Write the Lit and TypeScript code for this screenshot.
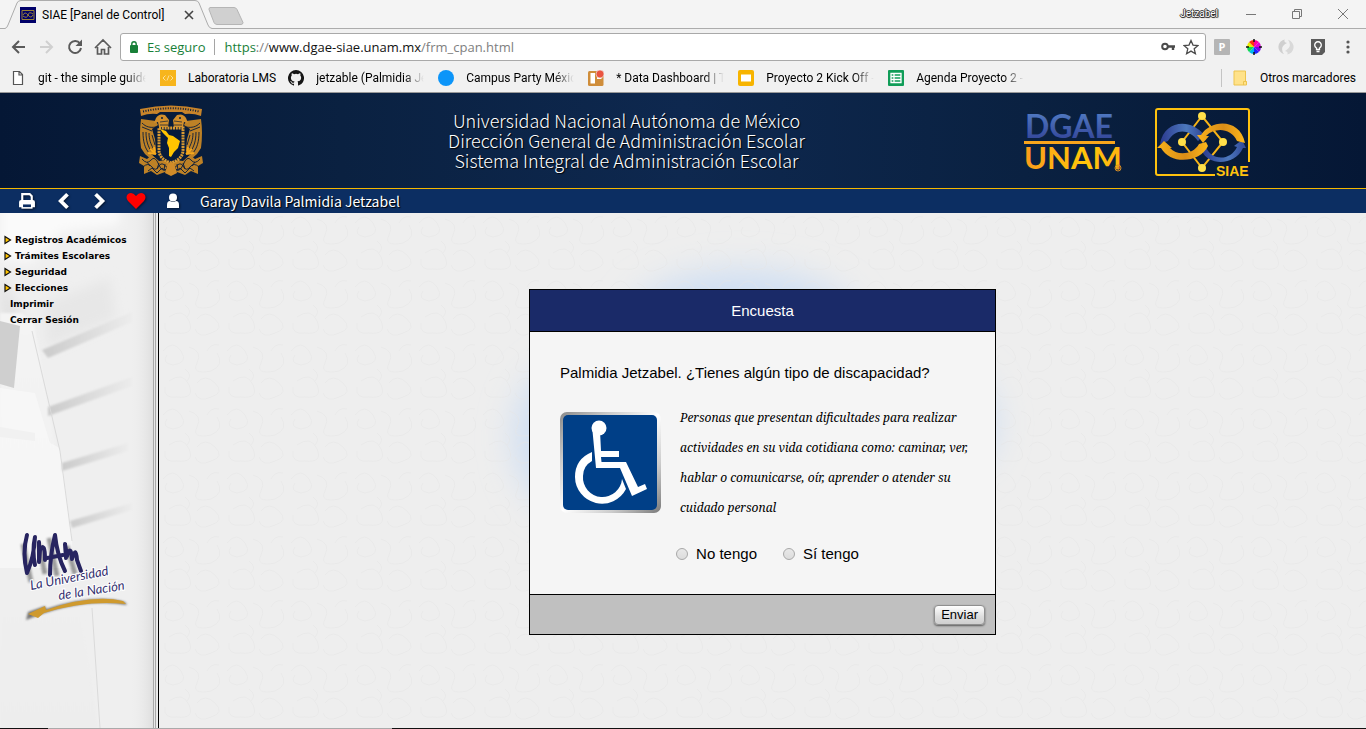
import { LitElement, html, css, svg } from "lit";
import { customElement, state } from "lit/decorators.js";

type Bookmark = { label: string; icon: unknown; fixed?: boolean };

const icon16 = (body: unknown) => html`<svg class="i16" viewBox="0 0 16 16" aria-hidden="true">${body}</svg>`;

const folder = svg`<path d="M2 1h11.500v10.500h1v3.500h-12.500z" fill="#ffe28a" stroke="#edc44f"/><path d="M11.500 15v-3.500h3" fill="none" stroke="#edc44f"/>`;

const bookmarks: Bookmark[] = [
  { label: "git - the simple guide", icon: svg`<path d="M3.500 1.500h6l3 3v10h-9zM9 1.500v3.500h3.500" fill="#fff" stroke="#555" stroke-width="1.200"/>` },
  { label: "Laboratoria LMS", fixed: true, icon: svg`<rect width="16" height="16" fill="#f7b51c"/><path d="M5.500 5.500L3 8l2.500 2.500M10.500 5.500L13 8l-2.500 2.500M9 5.500l-2 5" fill="none" stroke="#fde09a"/>` },
  { label: "jetzable (Palmidia Jet", icon: svg`<path fill="#161616" d="M8 0a8 8 0 0 0-2.530 15.590c.4.070.55-.17.55-.38v-1.490c-2.230.48-2.700-.95-2.700-.95-.36-.92-.89-1.170-.89-1.170-.73-.5.060-.49.060-.49.8.060 1.230.83 1.230.83.72 1.220 1.870.87 2.330.67.070-.52.280-.87.510-1.070-1.780-.2-3.640-.89-3.640-3.950 0-.87.310-1.590.82-2.150-.08-.2-.36-1.020.08-2.120 0 0 .67-.21 2.200.82a7.600 7.600 0 0 1 4 0c1.530-1.040 2.200-.82 2.200-.82.440 1.100.160 1.920.080 2.120.51.560.820 1.270.820 2.150 0 3.070-1.870 3.750-3.650 3.950.29.250.54.730.54 1.480v2.190c0 .21.150.46.550.38A8 8 0 0 0 8 0z"/>` },
  { label: "Campus Party Méxic", icon: svg`<circle cx="8" cy="8" r="8" fill="#0c95f9"/>` },
  { label: "* Data Dashboard | T", icon: svg`<rect y="1" width="15.500" height="15" rx="1.500" fill="#cf8d3a"/><rect x="2.500" y="3" width="4.500" height="10.500" fill="#fff"/><rect x="9" y="3" width="4.500" height="6" fill="#fff"/><circle cx="12" cy="4" r="4" fill="#ea5440" stroke="#f1f1f1" stroke-width=".6"/>` },
  { label: "Proyecto 2 Kick Off -", icon: svg`<rect width="16" height="16" rx="2" fill="#f7b400"/><rect x="3" y="4.500" width="10" height="7" fill="#fff"/>` },
  { label: "Agenda Proyecto 2 -", icon: svg`<rect width="16" height="16" rx="1" fill="#109d58"/><path d="M3 3.500h10v9H3zM3 6.500h10M3 9.500h10M6 3.500v9" fill="none" stroke="#fff" stroke-width="1.300"/>` },
];

const siaeMark = svg`
  <defs>
    <linearGradient id="blue"><stop offset="0" stop-color="#2b3a8f"/><stop offset=".6" stop-color="#4c78bd"/><stop offset="1" stop-color="#2f4596"/></linearGradient>
    <linearGradient id="gold"><stop offset="0" stop-color="#fbb21a"/><stop offset=".55" stop-color="#d98d18"/><stop offset="1" stop-color="#fdb81a"/></linearGradient>
  </defs>
  <path d="M94 54V3q0-2-2-2H3Q1 1 1 3v62q0 2 2 2h57" fill="none" stroke="#ffc20e" stroke-width="2"/>
  <path d="M47 8L27 34l20 26 21-26z" fill="none" stroke="#f7b416" stroke-width="2"/>
  <path d="M5 36C9 12 36 10 49 27l-6 6C34 21 21 20 13 33z" fill="url(#blue)"/>
  <path d="M50 36c4 17 25 18 32 3l-3-1 8-6 4 8-3 0C80 58 53 58 47 43z" fill="url(#blue)"/>
  <path d="M90 35C85 10 56 11 46 27l-4 0 6 8 6-7-3 0C60 19 76 20 82 33z" fill="url(#gold)"/>
  <path d="M6 40C16 58 46 54 53 38l-2-4-7 2C38 47 22 48 15 40l2 0-8-7-7 7z" fill="url(#gold)"/>
  <g fill="#ffe04a"><circle cx="47" cy="8" r="4"/><circle cx="27" cy="34" r="4"/><circle cx="68" cy="34" r="4"/><circle cx="47" cy="60" r="4"/></g>`;

const nav = {
  print: svg`<path d="M4 8V1.500h7l2 2V8" fill="none" stroke="#fff" stroke-width="2"/><path d="M1 14V9q0-2 2-2h11q2 0 2 2v5h-3v-3H4v3z" fill="#fff"/><rect x="4" y="10.500" width="9" height="4" fill="#0c2e62" stroke="#fff" stroke-width="1.500"/>`,
  back: svg`<path d="M12 2L6 8l6 6" fill="none" stroke="#fff" stroke-width="3.400"/>`,
  next: svg`<path d="M5 2l6 6-6 6" fill="none" stroke="#fff" stroke-width="3.400"/>`,
};

@customElement("app-root")
export class AppRoot extends LitElement {
  @state() private answer = "";

  static styles = css`
    :host { display: flex; flex-direction: column; min-height: 100vh; background: #eee; color: #000; --ui: Roboto, "Noto Sans", sans-serif; --url: "Open Sans", "Noto Sans", sans-serif; --head: "Noto Sans CJK SC", "Noto Sans", sans-serif; --form: "Liberation Sans", sans-serif; }
    * { box-sizing: border-box; }
    svg { display: block; flex: none; }
    button { border: 0; padding: 0; background: none; font: inherit; color: inherit; display: grid; place-items: center; flex: none; }
    a { color: inherit; text-decoration: none; }
    .i16 { width: 16px; height: 16px; }
    .i18 { width: 18px; height: 18px; }

    .tabs { display: flex; height: 29px; background: #f4f4f4; border-bottom: 1px solid #acacac; font: 12px/16px var(--ui); }
    .tab { position: relative; display: flex; align-items: center; gap: 6px; width: 212px; height: 29px; padding-left: 20px; }
    .tabshape { position: absolute; inset: 0; width: 212px; height: 29px; }
    .tab span, .tab button, .tab .i16 { position: relative; }
    .tab span { width: 136px; white-space: nowrap; }
    .newtab { margin: 7px 0 0 -4px; align-self: flex-start; }
    .win { margin-left: auto; display: flex; align-items: center; padding-right: 16px; }
    .who { font-size: 10px; color: #fff; margin-right: 26px; text-shadow: 1px 0 #333, -1px 0 #333, 0 1px #333, 0 -1px #333, 1px 1px 1px #555; }
    .win button { width: 14px; margin-left: 32px; }
    .win button:first-of-type { margin-left: 0; }

    .bar { display: flex; align-items: center; gap: 12px; height: 36px; padding: 0 12px 0 10px; background: #f1f1f1; }
    .bar .i16, .bar .i18 { flex: none; }
    .bar > .arrows { display: flex; gap: 10px; }
    .url { flex: 1; display: flex; align-items: center; height: 28px; margin-left: -4px; margin-right: -4px; padding: 0 6px; gap: 6px; background: #fff; border: 1px solid #a9a9a9; border-radius: 3px; font: 13px/20px var(--url); white-space: nowrap; }
    .safe { color: #188038; padding-right: 9px; border-right: 1px solid #a5a5a5; line-height: 16px; }
    .addr { flex: 1; min-width: 0; margin-left: 3px; color: #808080; }
    .addr b { font-weight: 400; color: #111; }
    .addr i { font-style: normal; color: #188038; }
    .ext { display: flex; gap: 16px; }

    .marks { display: flex; align-items: center; gap: 12px; height: 28px; padding: 0 10px 1px; background: #f1f1f1; border-bottom: 1px solid #999; font: 12px/18px var(--ui); white-space: nowrap; }
    .mark { display: flex; align-items: center; gap: 12px; }
    .mark span { width: 110px; overflow: hidden; mask-image: linear-gradient(90deg, #000 80%, transparent 98%); }
    .mark.fixed span { width: auto; mask-image: none; }
    .other { margin-left: auto; padding-left: 10px; border-left: 1px solid #c4c4c4; }

    header { display: flex; align-items: center; height: 96px; padding: 0 115px 0 139px; background: linear-gradient(90deg, #051735, #0a2141 25%, #0e284f 50%, #0a2141 75%, #051735); border-bottom: 1px solid #f4b700; }
    h1 { flex: 1; margin: 0; padding: 0 0 2px 26px; text-align: center; font: 300 18px/20px var(--head); color: #fff; text-shadow: 1px 1px 1px #000; }
    .logos { display: flex; gap: 33px; padding-top: 4px; }

    nav { display: flex; align-items: center; height: 24px; padding: 0 18px; gap: 18px; background: #0c2e62; color: #fff; font: 400 14px/20px var(--head); text-shadow: 1px 1px 1px #000; }
    nav svg { filter: drop-shadow(1px 1px 1px #0008); }

    .page { flex: 1; display: flex; }
    aside { display: grid; width: 159px; border-right: 1px solid #000; overflow: hidden; contain: size; background: #efefef; }
    aside > * { grid-area: 1 / 1; }
    .photo { width: 158px; height: 515px; }
    ul { z-index: 1; list-style: none; margin: 0; padding: 19px 0 0 4px; font: bold 9px/16px "DejaVu Sans", sans-serif; align-self: start; }
    li a { display: flex; align-items: center; gap: 3px; }
    .leaf { padding-left: 6px; }

    main { flex: 1; display: grid; overflow: hidden; }
    main > * { grid-area: 1 / 1; }
    .paper { width: 100%; height: 100%; contain: size; }
    form { z-index: 1; justify-self: center; align-self: start; width: 467px; margin: 76px 0; border: 1px solid #000; background: #f5f5f5; font: 15px/24px var(--form); }
    h2 { margin: 0; padding: 9px; border-bottom: 1px solid #000; background: #1a2a68; color: #fff; font: inherit; line-height: 23px; text-align: center; }
    .body { padding: 29px 20px 28px 30px; }
    .body p { margin: 0; }
    .info { display: flex; gap: 19px; margin-top: 18px; }
    .info svg { margin-top: 9px; }
    .info p { font: italic 12px/30px "Noto Serif", "Droid Serif", "DejaVu Serif Condensed", serif; }
    fieldset { display: flex; justify-content: center; gap: 26px; margin: 19px 0 0; padding: 0; border: 0; }
    label { display: flex; align-items: center; gap: 8px; }
    input { appearance: none; width: 12px; height: 12px; margin: 0; border: 1px solid #a8a8a8; border-radius: 50%; background: linear-gradient(#e8e8e8, #dcdcdc); }
    input:checked { background: radial-gradient(#444 35%, #e4e4e4 40%); }
    footer { display: flex; justify-content: flex-end; padding: 10px 10px 9px; border-top: 1px solid #000; background: #c0c0c0; }
    .send { height: 20px; padding: 0 6px; border: 1px solid #8f8f8f; border-radius: 4px; background: linear-gradient(#fff, #ddd 60%, #cfcfcf); font: 13px/18px var(--form); box-shadow: 0 1px 2px #0008; }
    .edge { height: 1px; background: linear-gradient(90deg, #111 48px, #aaa 48px 392px, #111 392px); }
  `;

  private crest() {
    const side = svg`
      <path d="M2 14l15 2 2 4-6 4 3 10 1 12-5 3 5 5-3 2-8-7-4-6Q0 28 2 14z" fill="#bd8126"/>
      <path d="M3 18c4 4 8 5 14 4M3 22l10 4M4 27c0 10 2 16 6 21M7 27c0 9 2 14 5 19M10 28c0 7 2 11 4 15M13 30l3 10" stroke="#071b3b" stroke-width=".9" fill="none"/>
      <path d="M17 13q3-5 9-3l4 5-1 7h-9l-1-5-4 1z" fill="#d28f2b"/><circle cx="23" cy="13" r="1" fill="#071b3b"/>
      <path d="M21 17l8-1M21 20h8" stroke="#071b3b" stroke-width=".7"/>
      <path d="M11 44l6 5M9 48l8 1M15 42l1 7" stroke="#f5a81c" stroke-width="2"/>
      <path d="M1 51l7 3 5-4 7 6 8-1 4 7v8l-6-3-8 3-6-4-7 3 0-8-5-3z" fill="#bd8126"/>
      <path d="M3 54q5 6 9 1t8 5 10 1M4 62q5-5 9 0t7-1 10 4M9 66l4-3 5 5 5-5 6 5M8 57l3 4M20 58l-2 6M26 59l-1 6" fill="none" stroke="#071b3b" stroke-width=".9"/>`;
    return html`<svg width="64" height="72" viewBox="0 0 64 72" role="img" aria-label="Escudo UNAM">
      <path d="M1 4Q32-3 63 4l-1 7q-8-3-16-2l-3-2H21l-3 2q-8-1-16 2z" fill="#c8842a"/>
      <path d="M4 6.500Q32 0 60 6.500" fill="none" stroke="#071b3b" stroke-width="2" stroke-dasharray="1 1.500"/>
      ${side}<g transform="matrix(-1 0 0 1 64 0)">${side}</g>
      <path d="M20 23h24v22q0 9-12 13-12-4-12-13z" fill="#071b3b" stroke="#d99a32" stroke-width="3" stroke-dasharray="2 .8"/>
      <path d="M21 24l6 2 3 4 4 1 7 5-2 7-4 4-3 5-2-1v-8l-2-5 1-5-5-5z" fill="#ffc400"/>
      <path d="M29 59l3-3 3 3 3 9-6 3-6-3z" fill="#d08b28"/>
    </svg>`;
  }

  private photo() {
    return html`<svg class="photo" viewBox="0 0 158 515" preserveAspectRatio="none" aria-hidden="true">
      <defs>
        <filter id="soft"><feGaussianBlur stdDeviation="6"/></filter>
        <filter id="soft1"><feGaussianBlur stdDeviation="1"/></filter>
        <linearGradient id="fade"><stop offset="0" stop-color="#cbcbcb"/><stop offset="1" stop-color="#ececec"/></linearGradient>
        <linearGradient id="down" x2="0" y2="1"><stop offset="0" stop-color="#f4f4f4"/><stop offset="1" stop-color="#ededed"/></linearGradient>
        <linearGradient id="spine"><stop offset="0" stop-color="#eee" stop-opacity="0"/><stop offset="1" stop-color="#ddd"/></linearGradient>
      </defs>
      <rect width="158" height="515" fill="#efefef"/>
      <g filter="url(#soft)">
        <path d="M0-10h120v22L60 20 30 50 0 45z" fill="#fafafa"/>
        <path d="M45 90l65-25 6 40-70 30z" fill="#e7e7e7"/><path d="M0 60l30 60-6 60H0z" fill="#e2e2e2"/>
      </g>
      <path d="M22 100l12 10 38 220 26 185H0V100z" fill="url(#down)" filter="url(#soft1)"/>
      <path d="M0 108l20 5-6 62-14-4z" fill="#cfcfcf"/><path d="M0 214l35 6v8L0 224z" fill="#d5d5d5"/>
      <path d="M0 175l35 5 15 50 10 5 12 90v30H0z" fill="#f8f8f8" opacity=".8"/>
      <g fill="url(#fade)" filter="url(#soft1)">
        <path d="M42 137l90-38v10L48 145z"/><path d="M48 194l84-30v9L48 203z"/><path d="M62 250l66-20v8L62 258z"/><path d="M70 308l62-18v7L72 315z"/>
      </g>
      <path d="M32 118l28 120 12 90M92 395l8 120" fill="none" stroke="#dadada"/>
      <rect x="130" width="24" height="515" fill="url(#spine)"/>
      <path d="M153.500 0v515M155.500 0v515" stroke="#a9a9a9"/><path d="M154.500 0v515M156.500 0v515" stroke="#e8e8e8"/>
      <g filter="url(#soft1)" opacity=".45" transform="translate(-3 3)"><path d="M26 328l8 38M42 328l6 30M52 322l8 38M70 330l8 28" stroke="#333" stroke-width="5"/></g>
      <g fill="none" stroke="#272460" stroke-linecap="round" stroke-linejoin="round">
        <path d="M27 322q-5 18 0 38 7-16 8-36-3 14 0 28" stroke-width="4"/>
        <path d="M39 329v20l1-12q5-9 5 10" stroke-width="4"/>
        <path d="M50 362q0-20 5-40 2 20 10 36M47 345l16-3" stroke-width="4"/>
        <path d="M66 345l-1-14 2 12q4-12 5 3 4-14 5 1l4 11" stroke-width="4"/>
      </g>
      <g fill="#35316f" stroke="#fff" stroke-width="2" paint-order="stroke" font-family="Lato, sans-serif" font-style="italic" font-size="13">
        <text transform="translate(31 377) rotate(-11)">La Universidad</text><text transform="translate(59 387) rotate(-9)">de la Nación</text>
      </g>
      <path d="M26 407q55-23 101-15l-2-3Q95 380 46 396l-1-3-17 6z" fill="#777" filter="url(#soft1)"/>
      <path d="M28 401l17-8 1 4Q92 381 123 388l3 3q-40-4-82 9l-6 5z" fill="#cf9a2e"/>
    </svg>`;
  }

  private paper() {
    return html`<svg class="paper" aria-hidden="true">
      <defs>
        <pattern id="curls" width="64" height="64" patternUnits="userSpaceOnUse">
          <g fill="none" stroke="#e5e5e5"><path d="M4 10q10-12 18 0t-8 14q-12-2-6-10M30 6q14 4 8 16t14 8q14-6 6-18M10 40q14-10 20 4t-12 12q-14 2-12-10M38 42q8-10 18 0t-4 14q-12 6-16-4M26 28q8 6 2 12M48 10q4-8 12-6"/></g>
        </pattern>
        <filter id="glow" x="-50%" y="-50%" width="200%" height="200%"><feGaussianBlur stdDeviation="17"/></filter>
      </defs>
      <rect width="100%" height="100%" fill="#eeeeee"/>
      <svg x="50%" width="1" height="1" overflow="visible"><g filter="url(#glow)" fill="#cedef3">
        <ellipse cx="-20" cy="112" rx="115" ry="54"/><ellipse cx="-188" cy="225" rx="60" ry="75"/><ellipse cx="192" cy="210" rx="40" ry="50"/>
      </g></svg>
      <rect width="100%" height="100%" fill="url(#curls)" opacity=".55"/>
    </svg>`;
  }

  render() {
    return html`
      <div class="tabs">
        <div class="tab">
          <svg class="tabshape" viewBox="0 0 212 29" aria-hidden="true"><path d="M0 28.500h5Q7 28 8 25L17 3q1-2.500 4-2.500h174q3 0 4 2.500l9 22q1 3 4 3.500v.5H0z" fill="#f1f1f1"/><path d="M0 28.500h5Q7 28 8 25L17 3q1-2.500 4-2.500h174q3 0 4 2.500l9 22q1 3 4 3.500" fill="none" stroke="#acacac"/></svg>
          <svg class="i16" viewBox="0 0 16 16" aria-hidden="true"><rect width="16" height="16" fill="#000069"/><path d="M2 3.500h12v9H2zM3 8q2-4 5 0t5 0M3 9q4 3 5-1t5-1" fill="none" stroke="#998238"/></svg>
          <span>SIAE [Panel de Control]</span>
          <button aria-label="Cerrar pestaña"><svg width="10" height="10" viewBox="0 0 10 10"><path d="M1 1l8 8M9 1L1 9" stroke="#444" stroke-width="1.600"/></svg></button>
        </div>
        <button class="newtab" aria-label="Nueva pestaña"><svg width="36" height="18" viewBox="0 0 36 18"><path d="M2 .5h24q2 0 3 2l6 13q0 2-2 2H9q-2 0-3-2L1 2.500Q1 .5 2 .5z" fill="#d0d0d0" stroke="#b5b5b5"/></svg></button>
        <div class="win">
          <span class="who">Jetzabel</span>
          <button aria-label="Minimizar"><svg width="12" height="12" viewBox="0 0 12 12"><path d="M1 6.500h10" stroke="#777"/></svg></button>
          <button aria-label="Restaurar"><svg width="12" height="12" viewBox="0 0 12 12"><path d="M1.500 3.500h7v7h-7zM3.500 3.500v-2h7v7h-2" fill="none" stroke="#777"/></svg></button>
          <button aria-label="Cerrar"><svg width="12" height="12" viewBox="0 0 12 12"><path d="M1 1l10 10M11 1L1 11" stroke="#777"/></svg></button>
        </div>
      </div>

      <div class="bar">
        <div class="arrows">
          <button aria-label="Atrás"><svg class="i18" viewBox="0 0 18 18"><path d="M15 9H3M9 3L3 9l6 6" fill="none" stroke="#5a5a5a" stroke-width="2"/></svg></button>
          <button aria-label="Adelante"><svg class="i18" viewBox="0 0 18 18"><path d="M2 9h12M8 3l6 6-6 6" fill="none" stroke="#d0d0d0" stroke-width="2"/></svg></button>
          <button aria-label="Recargar"><svg class="i18" viewBox="0 0 18 18"><path d="M14 5.500A6 6 0 1 0 15 10" fill="none" stroke="#5a5a5a" stroke-width="2"/><path d="M16 1.500V8H9.500z" fill="#5a5a5a"/></svg></button>
          <button aria-label="Inicio"><svg class="i18" viewBox="0 0 18 18"><path d="M1 10l8-8 8 8M3.500 9v7h4v-4.500h3V16h4V9" fill="none" stroke="#5a5a5a" stroke-width="1.700"/></svg></button>
        </div>
        <div class="url">
          <svg width="14" height="14" viewBox="0 0 14 14" aria-hidden="true"><rect x="3" y="5" width="8" height="8" rx="1" fill="#188038"/><path d="M4.800 6V4a2.200 2.200 0 0 1 4.400 0v2" fill="none" stroke="#188038" stroke-width="1.400"/></svg>
          <span class="safe">Es seguro</span>
          <span class="addr"><i>https</i>://<b>www.dgae-siae.unam.mx</b>/frm_cpan.html</span>
          <button aria-label="Contraseñas"><svg class="i16" viewBox="0 0 16 16"><circle cx="4" cy="7.500" r="2.800" fill="none" stroke="#4a4a4a" stroke-width="2"/><path d="M7 7.500h7M12 7.500V11" stroke="#4a4a4a" stroke-width="2.400"/></svg></button>
          <button aria-label="Añadir a marcadores"><svg class="i16" viewBox="0 0 16 16"><path d="M8 1.500l2 4.600 5 .4-3.800 3.300 1.200 4.900L8 12.100l-4.400 2.600 1.200-4.900L1 6.500l5-.4z" fill="none" stroke="#4a4a4a" stroke-width="1.300"/></svg></button>
        </div>
        <div class="ext">
          <svg class="i16" viewBox="0 0 16 16" aria-hidden="true"><rect width="16" height="16" rx="1" fill="#b5b5b5"/><text x="4.500" y="12" font-family="Open Sans" font-weight="700" font-size="11" fill="#fff">P</text></svg>
          <svg class="i16" viewBox="0 0 16 16" aria-hidden="true">${["#ff00a0", "#e000d8", "#7a00e8", "#1c20ff", "#00b8f0", "#10d850", "#e8ec00", "#ff3010"].map((c, i) => svg`<path d="M8 8L8 1A7 7 0 0 1 12.950 3.050z" fill=${c} transform=${`rotate(${i * 45} 8 8)`}/>`)}<path d="M8 0v3M8 13v3M0 8h3M13 8h3" stroke="#111" stroke-width="1.500"/></svg>
          <svg class="i16" viewBox="0 0 16 16" aria-hidden="true"><path d="M7 .5A7.500 7.500 0 0 0 6 15.200Q1 8 9 4Q5 3 7 .5z" fill="#cfcfcf"/><path d="M9 15.500A7.500 7.500 0 0 0 10 .8Q15 8 7 12q4 1 2 3.500z" fill="#d9d9d9"/></svg>
          <svg class="i16" viewBox="0 0 16 16" aria-hidden="true"><path d="M1 0h14v13l-3 3H1z" fill="#5b5b5b"/><path d="M6.500 10.500V9a3.300 3.300 0 1 1 3 0v1.500zM6.500 12.500h3" fill="none" stroke="#fff" stroke-width="1.300"/></svg>
          <button aria-label="Menú"><svg width="12" height="16" viewBox="0 0 12 16"><g fill="#555"><circle cx="6" cy="3" r="1.600"/><circle cx="6" cy="8" r="1.600"/><circle cx="6" cy="13" r="1.600"/></g></svg></button>
        </div>
      </div>

      <div class="marks">
        ${bookmarks.map((b) => html`<a class="mark ${b.fixed ? "fixed" : ""}" href="#">${icon16(b.icon)}<span>${b.label}</span></a>`)}
        <a class="mark fixed other" href="#">${icon16(folder)}<span>Otros marcadores</span></a>
      </div>

      <header>
        ${this.crest()}
        <h1>Universidad Nacional Autónoma de México<br>Dirección General de Administración Escolar<br>Sistema Integral de Administración Escolar</h1>
        <div class="logos">
          <svg width="98" height="68" viewBox="0 0 98 68" role="img" aria-label="DGAE UNAM">
            <defs>
              <linearGradient id="db" x2="0" y2="1"><stop offset="0" stop-color="#5685cb"/><stop offset="1" stop-color="#2f3d92"/></linearGradient>
              <linearGradient id="ug" x2="1" y2="0"><stop offset="0" stop-color="#fb9a1c"/><stop offset=".6" stop-color="#ffc60b"/><stop offset="1" stop-color="#ffb40f"/></linearGradient>
            </defs>
            <g font-family="Lato, sans-serif" font-weight="700"><text x="1" y="30" font-size="32" fill="url(#db)">DGAE</text><text x="0" y="61" font-size="31" fill="url(#ug)">UNAM</text></g>
            <rect y="33" width="91" height="3" fill="#f9a51c"/><circle cx="94" cy="60" r="3" fill="none" stroke="#d58c24"/><path d="M93 62v-3h2l-1 1 1 2" fill="none" stroke="#d58c24"/>
          </svg>
          <svg width="96" height="70" viewBox="0 0 96 70" role="img" aria-label="SIAE">${siaeMark}<text x="61" y="68" font-family="Liberation Sans, sans-serif" font-weight="700" font-size="14" fill="#ffc20e">SIAE</text></svg>
        </div>
      </header>

      <nav>
        <button aria-label="Imprimir"><svg class="i18" viewBox="0 0 17 16">${nav.print}</svg></button>
        <button aria-label="Anterior"><svg class="i18" viewBox="0 0 16 16">${nav.back}</svg></button>
        <button aria-label="Siguiente"><svg class="i18" viewBox="0 0 16 16">${nav.next}</svg></button>
        <button aria-label="Favoritos"><svg width="20" height="18" viewBox="0 0 20 18"><path d="M10 17L2 9Q-1 5 2 2q4-3 8 2 4-5 8-2 3 3 0 7z" fill="#f00"/></svg></button>
        <svg class="i18" viewBox="0 0 18 18" aria-hidden="true"><circle cx="9" cy="5.500" r="4" fill="#fff"/><path d="M3 16v-3q0-4 3-4 3 2 6 0 3 0 3 4v3z" fill="#fff"/></svg>
        <span>Garay Davila Palmidia Jetzabel</span>
      </nav>

      <div class="page">
        <aside>
          ${this.photo()}
          <ul>
            ${["Registros Académicos", "Trámites Escolares", "Seguridad", "Elecciones"].map((t) => html`<li><a href="#"><svg width="8" height="10" viewBox="0 0 8 10" aria-hidden="true"><path d="M1 1.500L6.500 5 1 8.500z" fill="#ffc400" stroke="#111" stroke-width="1.200"/></svg>${t}</a></li>`)}
            ${["Imprimir", "Cerrar Sesión"].map((t) => html`<li class="leaf"><a href="#">${t}</a></li>`)}
          </ul>
        </aside>
        <main>
          ${this.paper()}
          <form @submit=${(e: Event) => e.preventDefault()}>
            <h2>Encuesta</h2>
            <div class="body">
              <p>Palmidia Jetzabel. ¿Tienes algún tipo de discapacidad?</p>
              <div class="info">
                <svg width="101" height="101" viewBox="0 0 101 101" role="img" aria-label="Discapacidad">
                  <defs><linearGradient id="metal" x2="1" y2="1"><stop offset="0" stop-color="#8a8a8a"/><stop offset=".25" stop-color="#ccc"/><stop offset=".5" stop-color="#fff"/><stop offset=".75" stop-color="#ccc"/><stop offset="1" stop-color="#7a7a7a"/></linearGradient></defs>
                  <rect width="101" height="101" rx="7" fill="url(#metal)"/><rect x="3" y="3" width="94" height="95" rx="5" fill="#003f87"/>
                  <circle cx="39" cy="16" r="7.500" fill="#fff"/>
                  <path d="M32.500 19h7.500l1 20h18v6H41l.5 5H66l12 25 7-3 2 5-15 7-12-28H36z" fill="#fff"/>
                  <path d="M32 40q-17 7-17 25a27 27 0 0 0 51 12l-4-10a19 19 0 0 1-39-3q0-10 9-15z" fill="#fff"/>
                </svg>
                <p>Personas que presentan dificultades para realizar actividades en su vida cotidiana como: caminar, ver, hablar o comunicarse, oír, aprender o atender su cuidado personal</p>
              </div>
              <fieldset aria-label="Respuesta">
                ${[["no", "No tengo"], ["si", "Sí tengo"]].map(([v, t]) => html`<label><input type="radio" name="answer" value=${v} .checked=${this.answer === v} @change=${() => (this.answer = v)}>${t}</label>`)}
              </fieldset>
            </div>
            <footer><button class="send">Enviar</button></footer>
          </form>
        </main>
      </div>
      <div class="edge"></div>
    `;
  }
}
